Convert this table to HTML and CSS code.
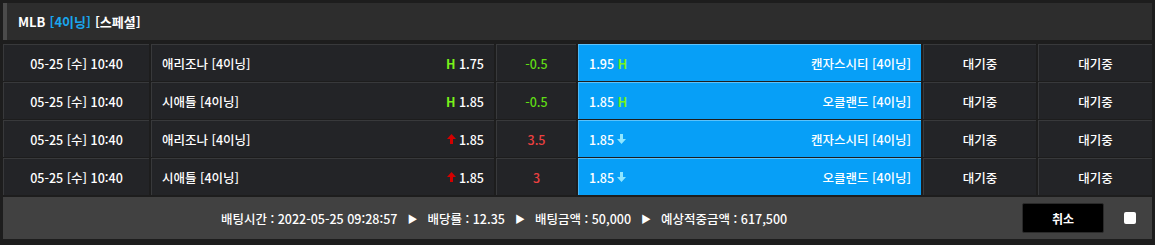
FILE: index.html
```html
<!DOCTYPE html>
<html lang="ko">
<head>
<meta charset="utf-8">
<link rel="stylesheet" href="styles.css">
</head>
<body>
<div class="wrap">
  <div class="head"><span class="w">MLB</span> <span class="c">[4이닝]</span> <span class="w">[스페셜]</span></div>
  <div class="grid">
    <div class="cell ctr">05-25 [수] 10:40</div>
    <div class="cell lr"><span>애리조나 [4이닝]</span><span><b class="h">H</b> 1.75</span></div>
    <div class="cell ctr green">-0.5</div>
    <div class="cell blue"><span>1.95 <b class="h">H</b></span><span>캔자스시티 [4이닝]</span></div>
    <div class="cell ctr">대기중</div>
    <div class="cell ctr">대기중</div>

    <div class="cell ctr">05-25 [수] 10:40</div>
    <div class="cell lr"><span>시애틀 [4이닝]</span><span><b class="h">H</b> 1.85</span></div>
    <div class="cell ctr green">-0.5</div>
    <div class="cell blue"><span>1.85 <b class="h">H</b></span><span>오클랜드 [4이닝]</span></div>
    <div class="cell ctr">대기중</div>
    <div class="cell ctr">대기중</div>

    <div class="cell ctr">05-25 [수] 10:40</div>
    <div class="cell lr"><span>애리조나 [4이닝]</span><span class="odd"><svg class="up" width="9" height="10" viewBox="0 0 9 10"><path d="M4.5 0 L9 5 L6 5 L6 10 L3 10 L3 5 L0 5 Z" fill="#d40000"/></svg>1.85</span></div>
    <div class="cell ctr red">3.5</div>
    <div class="cell blue"><span class="odd">1.85<svg class="dn" width="9" height="10" viewBox="0 0 9 10"><path d="M4.5 10 L9 5 L6 5 L6 0 L3 0 L3 5 L0 5 Z" fill="#8fe6ff"/></svg></span><span>캔자스시티 [4이닝]</span></div>
    <div class="cell ctr">대기중</div>
    <div class="cell ctr">대기중</div>

    <div class="cell ctr">05-25 [수] 10:40</div>
    <div class="cell lr"><span>시애틀 [4이닝]</span><span class="odd"><svg class="up" width="9" height="10" viewBox="0 0 9 10"><path d="M4.5 0 L9 5 L6 5 L6 10 L3 10 L3 5 L0 5 Z" fill="#d40000"/></svg>1.85</span></div>
    <div class="cell ctr red">3</div>
    <div class="cell blue"><span class="odd">1.85<svg class="dn" width="9" height="10" viewBox="0 0 9 10"><path d="M4.5 10 L9 5 L6 5 L6 0 L3 0 L3 5 L0 5 Z" fill="#8fe6ff"/></svg></span><span>오클랜드 [4이닝]</span></div>
    <div class="cell ctr">대기중</div>
    <div class="cell ctr">대기중</div>
  </div>
  <div class="foot">
    <div class="info">
      <span>배팅시간 : 2022-05-25 09:28:57</span><span class="tri">▶</span>
      <span>배당률 : 12.35</span><span class="tri">▶</span>
      <span>배팅금액 : 50,000</span><span class="tri">▶</span>
      <span>예상적중금액 : 617,500</span>
    </div>
    <button class="cancel">취소</button>
    <span class="chk"></span>
  </div>
</div>
</body>
</html>
```

FILE: styles.css
```css
html, body { margin: 0; padding: 0; }
body {
  background: #1d1d1d;
  font-family: "Noto Sans CJK KR", "Noto Sans", sans-serif;
  font-size: 12.5px;
  font-weight: 500;
  color: #fff;
  width: 1155px;
  height: 245px;
  overflow: hidden;
}
.wrap { padding: 3px 3px 0 3px; }
.head {
  height: 37px;
  box-sizing: border-box;
  background: #2d2d2d;
  border-left: 4px solid #4b4b4b;
  padding-left: 11px;
  display: flex;
  align-items: center;
  font-weight: bold;
  font-size: 13px;
  gap: 4px;
}
.head .c { color: #1aa6ee; }
.grid {
  margin-top: 4px;
  display: grid;
  grid-template-columns: 146px 343px 80px 343px 113px 114px;
  grid-auto-rows: 37px;
  gap: 1px 2px;
}
.cell {
  background: #232427;
  border-top: 1px solid #38393b;
  border-left: 1px solid #38393b;
  box-sizing: border-box;
  display: flex;
  align-items: center;
  padding: 0 10px;
  white-space: nowrap;
}
.ctr { justify-content: center; }
.lr, .blue { justify-content: space-between; }
.blue {
  background: #079ff7;
  border-top: 1px solid #5cc2fb;
  border-left: 1px solid #4fb8f5;
}
.h { color: #79f21a; font-weight: bold; }
.green { color: #5fdc14; }
.red { color: #ec4040; }
.odd { display: inline-flex; align-items: center; gap: 3px; }
.foot {
  margin-top: 2px;
  height: 42px;
  background: #414141;
  display: flex;
  align-items: center;
}
.info {
  margin-left: 218px;
  display: flex;
  align-items: center;
  gap: 10px;
}
.tri { font-size: 10px; }
.cancel {
  margin-left: auto;
  width: 82px;
  height: 30px;
  background: #000;
  border: 1px solid #2a2a2a;
  border-radius: 2px;
  color: #fff;
  font-family: inherit;
  font-size: 12px;
  font-weight: bold;
}
.chk {
  width: 12px;
  height: 12px;
  background: #fff;
  border-radius: 2px;
  margin: 0 16px 0 20px;
}
```
